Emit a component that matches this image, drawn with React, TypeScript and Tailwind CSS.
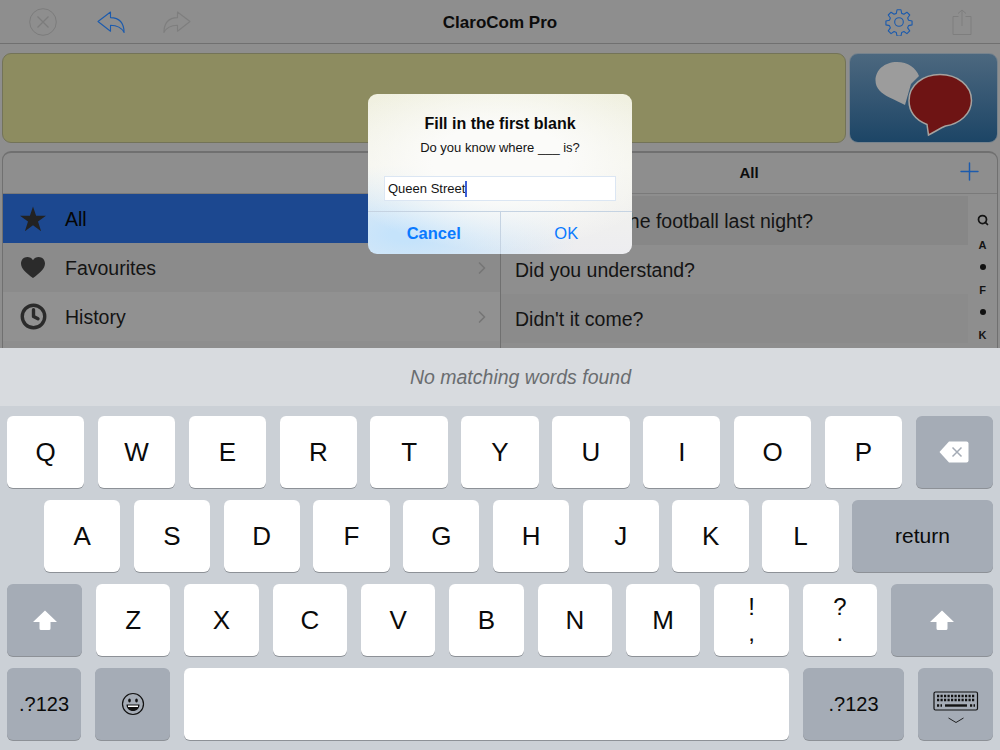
import React from "react";
import { Clock, ChevronRight, Search, Plus } from "lucide-react";

const FONT = "font-['Liberation_Sans',Arial,sans-serif]";

// left column rows
const categories = [
  { label: "All", icon: "star", active: true },
  { label: "Favourites", icon: "heart", active: false },
  { label: "History", icon: "clock", active: false },
];

const phrases = ["Did you see the football last night?", "Did you understand?", "Didn't it come?"];

const CloseIcon = () => (
  <svg width="28" height="28" viewBox="0 0 28 28" fill="none" stroke="#7c7c7c" strokeWidth="1">
    <circle cx="14" cy="14" r="13.3" />
    <path d="M8.5 8.5l11 11M19.5 8.5l-11 11" strokeWidth="1.2" />
  </svg>
);

const ReplyIcon = ({ color, flip }: { color: string; flip?: boolean }) => (
  <svg width="28" height="22" viewBox="0 0 28 22" fill="none" stroke={color} strokeWidth="1.1" strokeLinejoin="round" className={flip ? "-scale-x-100" : ""}>
    <path d="M1 10.5L13.5 1v5.6c7 .2 13.5 4 13.6 14.9-2.6-5-7.4-7.2-13.6-7.2v6z" />
  </svg>
);

const GearIcon = () => (
  <svg width="28" height="28" viewBox="0 0 24 24" fill="none" stroke="#1c5bad" strokeWidth="0.95" strokeLinejoin="round">
    <circle cx="12" cy="12" r="3.7" />
    <path d="M10.3 1.5h3.4l.6 3.1 1.9.8 2.6-1.8 2.4 2.4-1.8 2.6.8 1.9 3 .6v3.4l-3 .6-.8 1.9 1.8 2.6-2.4 2.4-2.6-1.8-1.9.8-.6 3h-3.4l-.6-3-1.9-.8-2.6 1.8-2.4-2.4 1.8-2.6-.8-1.9-3-.6v-3.4l3-.6.8-1.9-1.8-2.6 2.4-2.4 2.6 1.8 1.9-.8z" />
  </svg>
);

const ShareIcon = () => (
  <svg width="20" height="26" viewBox="0 0 20 26" fill="none" stroke="#7e7e7e" strokeWidth="1">
    <path d="M6.5 7.500H1v18h18v-18h-5.500" />
    <path d="M10 17V1M6 4.500L10 1l4 3.500" />
  </svg>
);

const BubblesIcon = () => (
  <svg width="147" height="88" viewBox="0 0 147 88">
    <path d="M47 8c-12.500 0-21.500 8-21.500 18.500 0 8 6 13 14 17 6 3 11 5 15.500 7.500l6-21 8-8C66 14 58 8 47 8z" fill="#9c9c9c" />
    <path d="M90 20.500c-17.500 0-31 11-31 26 0 12 8 20 18 24l1.500 10.500c6-3 12-7 17-9 14-2 26-12 26-25.500 0-15-14-26-31.500-26z" fill="#6e1414" stroke="#a5a29f" strokeWidth="1.500" />
  </svg>
);

const StarIcon = () => (
  <svg width="26" height="26" viewBox="0 0 26 26" fill="#222">
    <path d="M13 .5l3.100 9.300H26l-8 5.800 3.100 9.600L13 19.300l-8.100 5.900L8 15.600 0 9.800h9.900z" />
  </svg>
);

const HeartIcon = () => (
  <svg width="24" height="21" viewBox="0 0 24 21" fill="#2b2b2b">
    <path d="M12 21C5 16 0 11.500 0 6.500 0 2.800 2.800 0 6.300 0 8.600 0 10.800 1.200 12 3.200 13.200 1.200 15.400 0 17.700 0 21.200 0 24 2.800 24 6.500 24 11.500 19 16 12 21z" />
  </svg>
);

const ShiftIcon = () => (
  <svg width="26" height="22" viewBox="0 0 26 22" fill="#fff">
    <path d="M13 1.500L25 13h-6.500v6.500a1.500 1.500 0 0 1-1.500 1.500H9a1.500 1.500 0 0 1-1.500-1.500V13H1z" />
  </svg>
);

const DeleteIcon = () => (
  <svg width="30" height="22" viewBox="0 0 30 22">
    <path d="M10 .5h17.500a2 2 0 0 1 2 2v17a2 2 0 0 1-2 2H10L.5 11z" fill="#fff" />
    <path d="M13.500 6.500l9 9M22.500 6.500l-9 9" stroke="#a4abb5" strokeWidth="1.500" />
  </svg>
);

const EmojiIcon = () => (
  <svg width="24" height="24" viewBox="0 0 24 24" fill="none" stroke="#111" strokeWidth="1.200">
    <circle cx="12" cy="12" r="10.500" />
    <ellipse cx="8.500" cy="8.500" rx="1.300" ry="2" fill="#111" stroke="none" />
    <ellipse cx="15.500" cy="8.500" rx="1.300" ry="2" fill="#111" stroke="none" />
    <path d="M5.500 12.500h13c0 4-2.800 6.500-6.500 6.500s-6.500-2.500-6.500-6.500z" fill="#111" stroke="none" />
    <path d="M7 13.500h10v1.500H7z" fill="#fff" stroke="none" />
  </svg>
);

const KeyboardIcon = () => (
  <svg width="46" height="36" viewBox="0 0 46 36" fill="none">
    <rect x="1" y="1" width="43.500" height="18" rx="1.500" stroke="#111" strokeWidth="1.200" />
    <path d="M4 5h38M4 9h38" stroke="#111" strokeWidth="2.400" strokeDasharray="2.200 1.300" />
    <path d="M12 14.500h22" stroke="#111" strokeWidth="2.400" />
    <path d="M4 14.500h5M37 14.500h5" stroke="#111" strokeWidth="2.400" strokeDasharray="2.200 1.300" />
    <path d="M15.500 27l7.500 4.500 7.500-4.500" stroke="#111" strokeWidth="0.900" />
  </svg>
);

const Key = ({ children, className = "", dark }: { children?: React.ReactNode; className?: string; dark?: boolean }) => (
  <div
    className={`flex h-[72px] items-center justify-center rounded-[6px] shadow-[0_1px_0_#8d9197] text-[#0a0a0a] ${
      dark ? "bg-[#a5acb6]" : "bg-white"
    } ${className}`}
  >
    {children}
  </div>
);

const Letter = ({ c }: { c: string }) => (
  <Key className="flex-1 text-[26px]">{c}</Key>
);

const TwoLine = ({ top, bottom }: { top: string; bottom: string }) => (
  <Key className="w-[74.500px] flex-col text-[24px] leading-[26px]">
    <span>{top}</span>
    <span>{bottom}</span>
  </Key>
);

export default function App() {
  return (
    <div className={`relative flex h-[750px] w-[1000px] flex-col overflow-hidden bg-[#cbd0d6] ${FONT}`}>
      {/* dimmed app behind the alert */}
      <div className="h-[348px] shrink-0 overflow-hidden bg-[#8e8e8e]">
        <div className="flex h-[44px] items-center border-b border-[#707070]">
          <div className="flex w-[300px] items-center pl-[29px]">
            <CloseIcon />
            <span className="ml-[40px]"><ReplyIcon color="#1c5bad" /></span>
            <span className="ml-[38px]"><ReplyIcon color="#7e7e7e" flip /></span>
          </div>
          <div className="flex-1 pt-[2px] text-center text-[17px] font-bold text-[#0c0c0c]">ClaroCom Pro</div>
          <div className="flex w-[300px] items-center justify-end gap-[39px] pr-[28px]">
            <GearIcon />
            <ShareIcon />
          </div>
        </div>

        <div className="mt-[9px] flex h-[90px] gap-[3px] px-[2px]">
          <div className="flex-1 rounded-[9px] border border-[#737358] bg-[#8d8c60]" />
          <div className="w-[149px] overflow-hidden rounded-[9px] border border-[#77838d] bg-gradient-to-b from-[#4c687f] to-[#1c4566]">
            <BubblesIcon />
          </div>
        </div>

        <div className="mx-[2px] mt-[8px] flex h-[260px] overflow-hidden rounded-t-[9px] border-x border-t-2 border-[#707070]">
          <div className="w-[498px] shrink-0 border-r border-[#707070]">
            <div className="h-[41px] border-b border-[#7a7a7a]" />
            {categories.map((cat) => (
              <div
                key={cat.label}
                className={`flex h-[49px] items-center text-[19.500px] ${
                  cat.active ? "bg-[#1c4890] text-[#050505]" : cat.label === "History" ? "bg-[#919191] text-[#141414]" : "bg-[#8b8b8b] text-[#141414]"
                }`}
              >
                <span className="flex w-[60px] justify-center">
                  {cat.icon === "star" && <StarIcon />}
                  {cat.icon === "heart" && <HeartIcon />}
                  {cat.icon === "clock" && <Clock size={27} stroke="#2b2b2b" strokeWidth={3} />}
                </span>
                <span className="ml-[2px] flex-1 pt-[2px]">{cat.label}</span>
                {!cat.active && <ChevronRight size={20} stroke="#767676" className="mr-[8px]" />}
              </div>
            ))}
          </div>

          <div className="flex-1">
            <div className="relative flex h-[41px] items-center justify-center border-b border-[#7a7a7a]">
              <span className="text-[15px] font-bold text-[#0c0c0c]">All</span>
              <Plus size={29} strokeWidth={1.200} stroke="#1c5bad" className="absolute top-[4px] right-[13px]" />
            </div>
            <div className="flex">
              <div className="w-[467px] pt-[2px]">
                {phrases.map((p, i) => (
                  <div key={p} className={`flex h-[49px] items-center pt-[2px] pl-[14px] text-[19.500px] text-[#141414] ${i === 0 ? "bg-[#878787]" : i === 2 ? "bg-[#8b8b8b]" : ""}`}>
                    {p}
                  </div>
                ))}
              </div>
              <div className="flex flex-1 flex-col items-center pt-[15px] text-[11px] leading-[22.500px] font-bold text-[#141414]">
                <span className="flex h-[22.500px] items-center"><Search size={12} strokeWidth={3.500} /></span>
                <span className="pt-[2px]">A</span>
                <span className="flex h-[22.500px] items-center"><span className="size-[6px] rounded-full bg-[#111]" /></span>
                <span>F</span>
                <span className="flex h-[22.500px] items-center"><span className="size-[6px] rounded-full bg-[#111]" /></span>
                <span>K</span>
              </div>
            </div>
          </div>
        </div>
      </div>

      {/* keyboard */}
      <div className="flex h-[58px] shrink-0 items-center justify-center bg-[#d8dbdf] pt-[2px] pl-[41px] text-[19.500px] text-[#6a6d70] italic">
        No matching words found
      </div>
      <div className="flex flex-col gap-[12px] pt-[10px]">
        <div className="flex gap-[13.400px] px-[7px]">
          {"QWERTYUIOP".split("").map((c) => <Letter key={c} c={c} />)}
          <Key dark className="flex-1"><DeleteIcon /></Key>
        </div>
        <div className="flex gap-[13.500px] pr-[7px] pl-[44px]">
          {"ASDFGHJKL".split("").map((c) => <Letter key={c} c={c} />)}
          <Key dark className="w-[141px] text-[21px]">return</Key>
        </div>
        <div className="flex gap-[13.850px] px-[7px]">
          <Key dark className="w-[75px]"><ShiftIcon /></Key>
          {"ZXCVBNM".split("").map((c) => <Key key={c} className="w-[74.500px] text-[26px]">{c}</Key>)}
          <TwoLine top="!" bottom="," />
          <TwoLine top="?" bottom="." />
          <Key dark className="w-[102px]"><ShiftIcon /></Key>
        </div>
        <div className="flex gap-[14px] px-[7px]">
          <Key dark className="w-[74px] text-[20px]">.?123</Key>
          <Key dark className="w-[75px]"><EmojiIcon /></Key>
          <Key className="w-[605px]" />
          <Key dark className="w-[101px] text-[20px]">.?123</Key>
          <Key dark className="w-[75px] pt-[9px]"><KeyboardIcon /></Key>
        </div>
      </div>

      {/* alert */}
      <div className="absolute top-[94px] left-[368px] flex h-[160px] w-[264px] flex-col overflow-hidden rounded-[9px] bg-[radial-gradient(ellipse_170px_90px_at_50%_42%,#fbfbf9_40%,rgba(251,251,249,0)_100%),radial-gradient(ellipse_170px_70px_at_15%_88%,#c5e3fb_10%,rgba(197,227,251,0)_100%),linear-gradient(180deg,#f0f0e0_0%,#f4f4ec_45%,#ededf0_100%)]">
        <div className="pt-[20px] text-center text-[16px] leading-[20px] font-bold text-[#0a0a0a]">Fill in the first blank</div>
        <div className="pt-[6px] text-center text-[13px] leading-[16px] text-[#141414]">Do you know where ___ is?</div>
        <div className="mx-[16px] mt-[20px] flex h-[25px] items-center border border-[#dbe6f3] bg-white pl-[3px] text-[13px] text-[#141414]">
          Queen Street
          <span className="h-[16px] w-[2px] bg-[#3b5fd9]" />
        </div>
        <div className="mt-[10px] flex flex-1 border-t border-[#c5d3e2]">
          <div className="flex flex-1 items-center justify-center border-r border-[#c5d3e2] text-[16.500px] font-bold text-[#0a7aff]">Cancel</div>
          <div className="flex flex-1 items-center justify-center text-[16.500px] text-[#0a7aff]">OK</div>
        </div>
      </div>
    </div>
  );
}
